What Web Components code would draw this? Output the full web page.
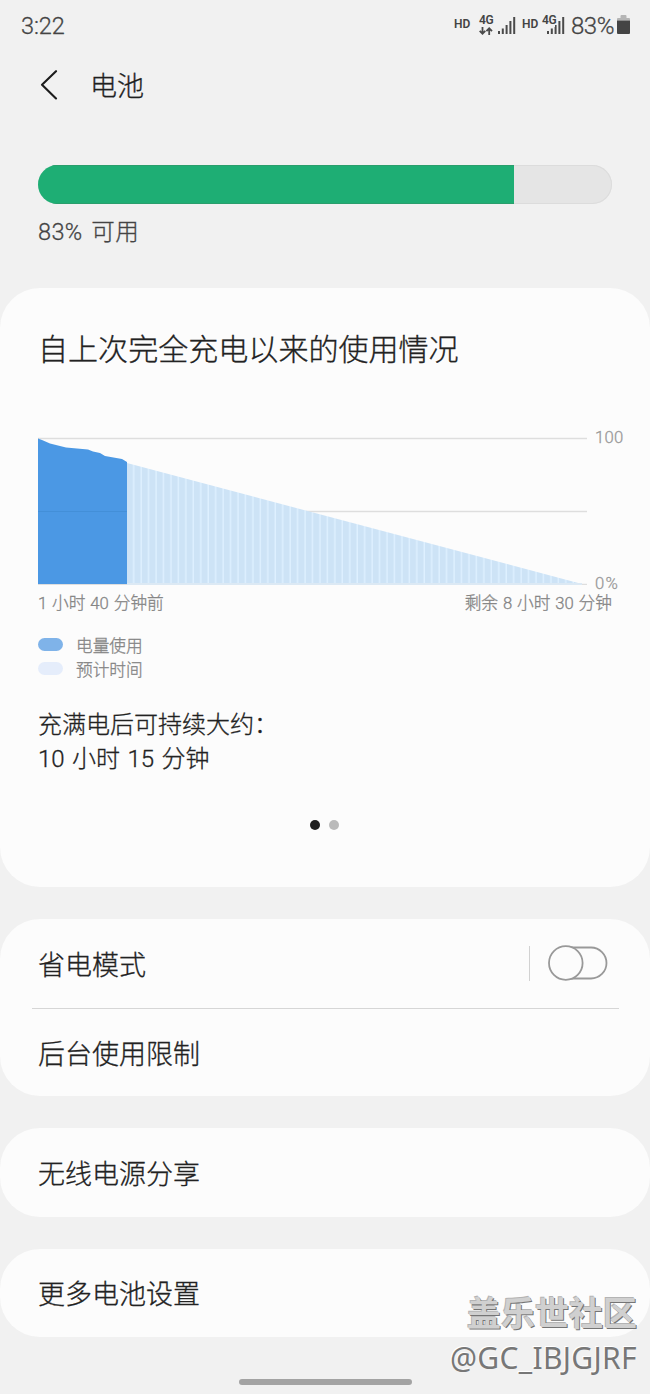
<!DOCTYPE html>
<html lang="zh-CN">
<head>
<meta charset="utf-8">
<title>电池</title>
<style>
  html, body { margin: 0; padding: 0; }
  body {
    width: 650px;
    height: 1394px;
    overflow: hidden;
    background: #f1f1f1;
    color: #222;
    font-family: Roboto, "Noto Sans CJK SC", sans-serif;
    font-weight: 300;
    -webkit-text-stroke: 0.3px;
  }
</style>
</head>
<body>
<battery-screen></battery-screen>

<script>
  class BaseElement extends HTMLElement {
    constructor() {
      super();
      this.attachShadow({ mode: 'open' });
    }

    connectedCallback() {
      this.shadowRoot.innerHTML = `<style>${this.css()}</style>${this.html()}`;
    }

    css() { return ''; }
    html() { return ''; }
  }

  class SignalIcon extends BaseElement {
    css() {
      return `
        :host { display: block; width: 18px; height: 18px; }
        svg { display: block; }
      `;
    }
    html() {
      return `<svg width="18" height="18" viewBox="0 0 18 18" fill="none" stroke="#4a4a4a" stroke-width="2">
        <path d="M1 18v-3M4.800 18v-5.500M8.600 18V9M12.400 18V5M16.200 18V1"/>
      </svg>`;
    }
  }
  customElements.define('signal-icon', SignalIcon);

  class StatusBar extends BaseElement {
    css() {
      return `
        :host { display: flex; align-items: flex-start; height: 50px; padding: 0 20px 0 21px; color: #444; box-sizing: border-box; }
        .time { font-size: 23.500px; line-height: 52px; flex: 1; letter-spacing: -0.1px; }
        .hd { font-size: 12px; font-weight: 600; line-height: 14px; margin-top: 17px; width: 17px; -webkit-text-stroke: 0; }
        .net { width: 16px; margin: 14px 3px 0 8px; font-size: 12px; font-weight: 600; line-height: 12px; letter-spacing: -0.4px; -webkit-text-stroke: 0; }
        .net svg { display: block; margin: 1px 0 0; }
        .net.second { width: 15px; margin: 14px -10px 0 3px; }
        signal-icon { margin-top: 16px; }
        signal-icon.small { clip-path: polygon(0 11px, 8px 11px, 8px 8px, 11px 8px, 11px 0, 18px 0, 18px 18px, 0 18px); }
        .hd.b { margin-left: 6px; }
        .level { margin-left: 6px; font-size: 24px; line-height: 52px; width: 43px; white-space: nowrap; letter-spacing: -0.5px; }
        .batt { display: block; margin: 15px 0 0 3px; }
      `;
    }
    html() {
      return `
        <span class="time">3:22</span>
        <span class="hd">HD</span>
        <span class="net">4G
          <svg width="14" height="8" viewBox="0 0 14 8" fill="none" stroke="#4a4a4a" stroke-width="1.800">
            <path d="M3.500 0v6.500M.7 3.800l2.800 2.900 2.800-2.900M10.200 8V1.500M7.400 4.200l2.800-2.900L13 4.200"/>
          </svg>
        </span>
        <signal-icon></signal-icon>
        <span class="hd b">HD</span>
        <span class="net second">4G</span>
        <signal-icon class="small"></signal-icon>
        <span class="level">83%</span>
        <svg class="batt" width="13" height="19" viewBox="0 0 13 19">
          <path d="M0 5.500V4a1 1 0 0 1 1-1h2.500V1a1 1 0 0 1 1-1h4a1 1 0 0 1 1 1v2H12a1 1 0 0 1 1 1v1.500z" fill="#b5b5b5"/>
          <path d="M0 5.500h13V18a1 1 0 0 1-1 1H1a1 1 0 0 1-1-1z" fill="#444"/>
        </svg>
      `;
    }
  }
  customElements.define('status-bar', StatusBar);

  class PageHeader extends BaseElement {
    css() {
      return `
        :host { display: flex; align-items: center; height: 70px; padding-left: 40px; }
        svg { display: block; margin-right: 32px; }
        .title { font-size: 27px; line-height: 40px; margin-top: 4px; color: #1f1f1f; }
      `;
    }
    html() {
      return `
        <svg width="18" height="30" viewBox="0 0 18 30" fill="none" stroke="#1c1c1c" stroke-width="2.100" stroke-linecap="round" stroke-linejoin="round">
          <path d="M16 1.200L2 14.800 16 28.500"/>
        </svg>
        <span class="title"><slot></slot></span>
      `;
    }
  }
  customElements.define('page-header', PageHeader);

  class BatteryLevel extends BaseElement {
    css() {
      return `
        :host { display: block; height: 123px; padding: 45px 38px 0; }
        .track { height: 39px; border-radius: 20px; overflow: hidden; background: #e5e5e5; box-shadow: inset 0 0 0 1px #dcdcdc; }
        .fill { height: 100%; width: 83%; background: #1eae74; box-shadow: inset 0 1px #2a9e6c, inset 0 -1px #2a9e6c; }
        .text { font-size: 23.500px; line-height: 34px; margin-top: 11px; color: #444; letter-spacing: 0.4px; word-spacing: 2.500px; }
      `;
    }
    html() {
      return `
        <div class="track"><div class="fill"></div></div>
        <div class="text"><slot></slot></div>
      `;
    }
  }
  customElements.define('battery-level', BatteryLevel);

  class PanelCard extends BaseElement {
    css() {
      return `
        :host { display: block; background: #fcfcfc; border-radius: 40px; margin-bottom: 32px; box-sizing: border-box; overflow: hidden; }
      `;
    }
    html() { return '<slot></slot>'; }
  }
  customElements.define('panel-card', PanelCard);

  class UsageChart extends BaseElement {
    css() {
      return `
        :host { display: block; color: #858585; font-size: 16.700px; }
        .plot { display: grid; grid-template-columns: 549px auto; column-gap: 8px; height: 148px; }
        .plot svg { display: block; }
        .scale { display: flex; flex-direction: column; justify-content: space-between; margin: -9px 0 -9px; line-height: 20px; color: #999; letter-spacing: 0.3px; }
        .scale span:last-child { letter-spacing: 1.200px; }
        .range { display: flex; justify-content: space-between; width: 574px; margin-top: 7px; line-height: 24px; word-spacing: 0.8px; }
      `;
    }
    html() {
      // estimated time is drawn as wide pale bars with thin lighter gaps
      return `
        <div class="plot">
          <svg width="549" height="148" viewBox="0 0 549 148">
            <defs>
              <pattern id="stripes" x="89" width="7.450" height="148" patternUnits="userSpaceOnUse">
                <rect width="7.450" height="148" fill="#cde3f6"/>
                <rect x="6" width="1.450" height="148" fill="#def0ff"/>
              </pattern>
            </defs>
            <path d="M0 1.500h549M0 74.500h549M0 147.500h549" stroke="#dedede" stroke-width="1.500"/>
            <path d="M89 26L544 147H89z" fill="url(#stripes)"/>
            <path d="M89 147h455" stroke="#dce9f4" stroke-width="2"/>
            <path d="M0 1.500L4 3 12 6.500 28 10.500 50 12.500 55 14.500 62 16 67 19 84 22 89 25V147H0z" fill="#4b98e4"/>
            <path d="M0 74.500h89" stroke="#438fd8"/>
          </svg>
          <div class="scale"><span>100</span><span>0%</span></div>
        </div>
        <div class="range"><span>1 小时 40 分钟前</span><span>剩余 8 小时 30 分钟</span></div>
      `;
    }
  }
  customElements.define('usage-chart', UsageChart);

  class LegendItem extends BaseElement {
    css() {
      return `
        :host { display: flex; align-items: flex-start; height: 24px; font-size: 16.700px; line-height: 27px; color: #858585; }
        i { width: 25px; height: 13px; border-radius: 7px; margin: 5px 13px 0 0; background: ${this.getAttribute('color')}; }
      `;
    }
    html() { return '<i></i><slot></slot>'; }
  }
  customElements.define('legend-item', LegendItem);

  class PageDots extends BaseElement {
    css() {
      return `
        :host { display: flex; justify-content: center; gap: 9px; }
        i { width: 10px; height: 10px; border-radius: 50%; background: #bababa; }
        i.on { background: #202020; }
      `;
    }
    html() { return '<i class="on"></i><i></i>'; }
  }
  customElements.define('page-dots', PageDots);

  class ToggleSwitch extends BaseElement {
    css() { return ':host { display: block; } svg { display: block; }'; }
    html() {
      return `<svg width="60" height="36" viewBox="0 0 60 36" fill="#fcfcfc" stroke="#999" stroke-width="1.800">
        <rect x="3" y="2.500" width="55.500" height="31" rx="15.500"/>
        <circle cx="17.800" cy="18" r="16.800"/>
      </svg>`;
    }
  }
  customElements.define('toggle-switch', ToggleSwitch);

  class SettingRow extends BaseElement {
    css() {
      return `
        :host { display: flex; align-items: center; justify-content: space-between; height: 88.500px; padding: 0 42px 0 38px; font-size: 27px; line-height: 40px; box-sizing: border-box; color: #222; }
        .label { padding-top: 5px; }
        .side { display: flex; align-items: center; }
        .side ::slotted(toggle-switch) { margin-left: 18px; }
        .line { width: 1.500px; height: 35px; background: #d2d2d2; }
      `;
    }
    html() {
      const side = this.hasAttribute('toggle')
        ? '<div class="side"><div class="line"></div><slot name="control"></slot></div>'
        : '';
      return `<span class="label"><slot></slot></span>${side}`;
    }
  }
  customElements.define('setting-row', SettingRow);

  class WaterMark extends BaseElement {
    css() {
      return `
        :host { position: absolute; right: 13px; top: 1290px; text-align: right; white-space: nowrap; -webkit-text-stroke: 0; }
        .site { font-size: 34px; line-height: 48px; font-weight: 700; color: #d0d0d0; text-shadow: 1px 1px #757575, -1px -1px #b4b4b4; }
        .user { font-family: "Noto Sans", sans-serif; font-weight: 400; font-size: 30px; line-height: 40px; letter-spacing: 0.350px; color: #777; text-shadow: -1px -1px #fff; }
      `;
    }
    html() {
      return '<div class="site">盖乐世社区</div><div class="user">@GC_IBJGJRF</div>';
    }
  }
  customElements.define('water-mark', WaterMark);

  class BatteryScreen extends BaseElement {
    css() {
      return `
        :host { display: block; position: relative; width: 650px; height: 1394px; overflow: hidden; }
        .usage { height: 599px; padding: 39px 38px 0; }
        h2 { margin: 0 0 65px; font-size: 30.050px; line-height: 45px; font-weight: inherit; color: #222; }
        .legend { margin-top: 17px; }
        .full { margin-top: 27px; font-size: 24px; line-height: 34px; color: #222; word-spacing: 1.600px; }
        page-dots { margin: 44px 1px 0 0; }
        .pair { height: 177px; }
        .rule { height: 1px; margin: 0 31px 0 32px; background: #d6d6d6; }
        .rule + setting-row { height: 87.500px; }
        .single { height: 88.500px; }
        .home { width: 173px; height: 6px; margin: 42px auto 0; border-radius: 3px; background: #a3a3a3; }
      `;
    }
    html() {
      return `
        <status-bar></status-bar>
        <page-header>电池</page-header>
        <battery-level>83% 可用</battery-level>
        <panel-card class="usage">
          <h2>自上次完全充电以来的使用情况</h2>
          <usage-chart></usage-chart>
          <div class="legend">
            <legend-item color="#7fb3e9">电量使用</legend-item>
            <legend-item color="#e5edfb">预计时间</legend-item>
          </div>
          <div class="full">充满电后可持续大约：<br>10 小时 15 分钟</div>
          <page-dots></page-dots>
        </panel-card>
        <panel-card class="pair">
          <setting-row toggle>省电模式<toggle-switch slot="control"></toggle-switch></setting-row>
          <div class="rule"></div>
          <setting-row>后台使用限制</setting-row>
        </panel-card>
        <panel-card class="single"><setting-row>无线电源分享</setting-row></panel-card>
        <panel-card class="single"><setting-row>更多电池设置</setting-row></panel-card>
        <div class="home"></div>
        <water-mark></water-mark>
      `;
    }
  }
  customElements.define('battery-screen', BatteryScreen);
</script>
</body>
</html>
